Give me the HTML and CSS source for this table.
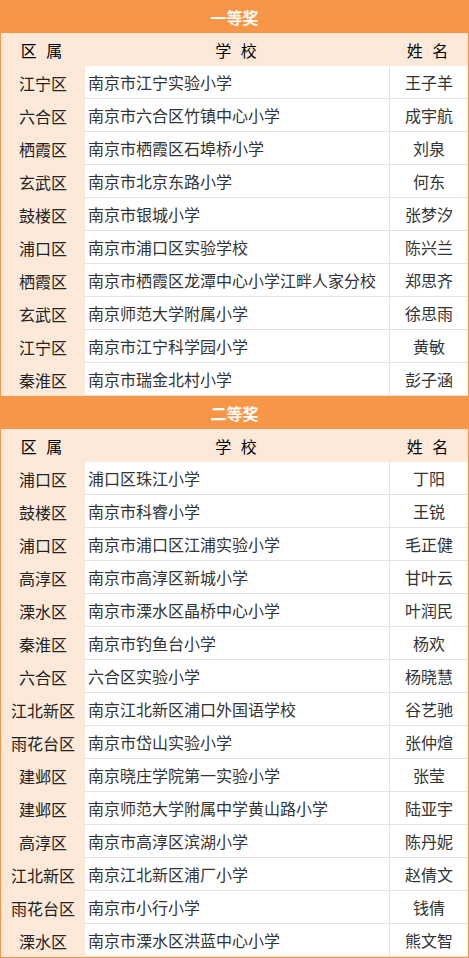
FILE: index.html
```html
<!DOCTYPE html>
<html lang="zh-CN">
<head>
    <meta charset="UTF-8">
    <meta name="viewport" content="width=device-width, initial-scale=1.0">
    <title>获奖名单</title>
    <link rel="stylesheet" href="styles.css">
</head>
<body>
    <div class="board">
        <div class="prize-title">一等奖</div>
        <div class="head-row">
            <span>区 属</span>
            <span>学 校</span>
            <span>姓 名</span>
        </div>
        <div class="row"><span class="district">江宁区</span><span class="school">南京市江宁实验小学</span><span class="name">王子羊</span></div>
        <div class="row"><span class="district">六合区</span><span class="school">南京市六合区竹镇中心小学</span><span class="name">成宇航</span></div>
        <div class="row"><span class="district">栖霞区</span><span class="school">南京市栖霞区石埠桥小学</span><span class="name">刘泉</span></div>
        <div class="row"><span class="district">玄武区</span><span class="school">南京市北京东路小学</span><span class="name">何东</span></div>
        <div class="row"><span class="district">鼓楼区</span><span class="school">南京市银城小学</span><span class="name">张梦汐</span></div>
        <div class="row"><span class="district">浦口区</span><span class="school">南京市浦口区实验学校</span><span class="name">陈兴兰</span></div>
        <div class="row"><span class="district">栖霞区</span><span class="school">南京市栖霞区龙潭中心小学江畔人家分校</span><span class="name">郑思齐</span></div>
        <div class="row"><span class="district">玄武区</span><span class="school">南京师范大学附属小学</span><span class="name">徐思雨</span></div>
        <div class="row"><span class="district">江宁区</span><span class="school">南京市江宁科学园小学</span><span class="name">黄敏</span></div>
        <div class="row"><span class="district">秦淮区</span><span class="school">南京市瑞金北村小学</span><span class="name">彭子涵</span></div>

        <div class="prize-title">二等奖</div>
        <div class="head-row">
            <span>区 属</span>
            <span>学 校</span>
            <span>姓 名</span>
        </div>
        <div class="row"><span class="district">浦口区</span><span class="school">浦口区珠江小学</span><span class="name">丁阳</span></div>
        <div class="row"><span class="district">鼓楼区</span><span class="school">南京市科睿小学</span><span class="name">王锐</span></div>
        <div class="row"><span class="district">浦口区</span><span class="school">南京市浦口区江浦实验小学</span><span class="name">毛正健</span></div>
        <div class="row"><span class="district">高淳区</span><span class="school">南京市高淳区新城小学</span><span class="name">甘叶云</span></div>
        <div class="row"><span class="district">溧水区</span><span class="school">南京市溧水区晶桥中心小学</span><span class="name">叶润民</span></div>
        <div class="row"><span class="district">秦淮区</span><span class="school">南京市钓鱼台小学</span><span class="name">杨欢</span></div>
        <div class="row"><span class="district">六合区</span><span class="school">六合区实验小学</span><span class="name">杨晓慧</span></div>
        <div class="row"><span class="district">江北新区</span><span class="school">南京江北新区浦口外国语学校</span><span class="name">谷艺驰</span></div>
        <div class="row"><span class="district">雨花台区</span><span class="school">南京市岱山实验小学</span><span class="name">张仲煊</span></div>
        <div class="row"><span class="district">建邺区</span><span class="school">南京晓庄学院第一实验小学</span><span class="name">张莹</span></div>
        <div class="row"><span class="district">建邺区</span><span class="school">南京师范大学附属中学黄山路小学</span><span class="name">陆亚宇</span></div>
        <div class="row"><span class="district">高淳区</span><span class="school">南京市高淳区滨湖小学</span><span class="name">陈丹妮</span></div>
        <div class="row"><span class="district">江北新区</span><span class="school">南京江北新区浦厂小学</span><span class="name">赵倩文</span></div>
        <div class="row"><span class="district">雨花台区</span><span class="school">南京市小行小学</span><span class="name">钱倩</span></div>
        <div class="row"><span class="district">溧水区</span><span class="school">南京市溧水区洪蓝中心小学</span><span class="name">熊文智</span></div>
    </div>
</body>
</html>
```

FILE: styles.css
```css
:root {
    --orange: #F79646;
    --peach: #FDE9D9;
    --line: #E3E3E3;
}

body {
    margin: 0;
    padding: 0;
    font-family: "Noto Sans CJK SC", "Noto Sans", sans-serif;
    font-size: 16px;
    color: #333333;
    background: #FFFFFF;
}

.board {
    width: 469px;
    box-sizing: border-box;
    border: 1px solid var(--orange);
    border-top: 0;
    background: #FFFFFF;
}

.prize-title {
    height: 33px;
    display: flex;
    align-items: center;
    justify-content: center;
    background: var(--orange);
    color: #FFFFFF;
    font-weight: bold;
    font-size: 16px;
}

.head-row,
.row {
    display: grid;
    grid-template-columns: 84px 305px 1fr;
}

.head-row {
    height: 33px;
    background: var(--peach);
    color: #000000;
}

.head-row span {
    display: flex;
    align-items: center;
    justify-content: center;
    letter-spacing: 3px;
}

.row {
    height: 33px;
}

.row span {
    display: flex;
    align-items: center;
    box-sizing: border-box;
}

.district {
    justify-content: center;
    background: var(--peach);
    color: #222222;
}

.school {
    padding-left: 3px;
    border-right: 1px solid var(--line);
    border-bottom: 1px solid var(--line);
    white-space: nowrap;
}

.name {
    justify-content: center;
    border-bottom: 1px solid var(--line);
}
```
